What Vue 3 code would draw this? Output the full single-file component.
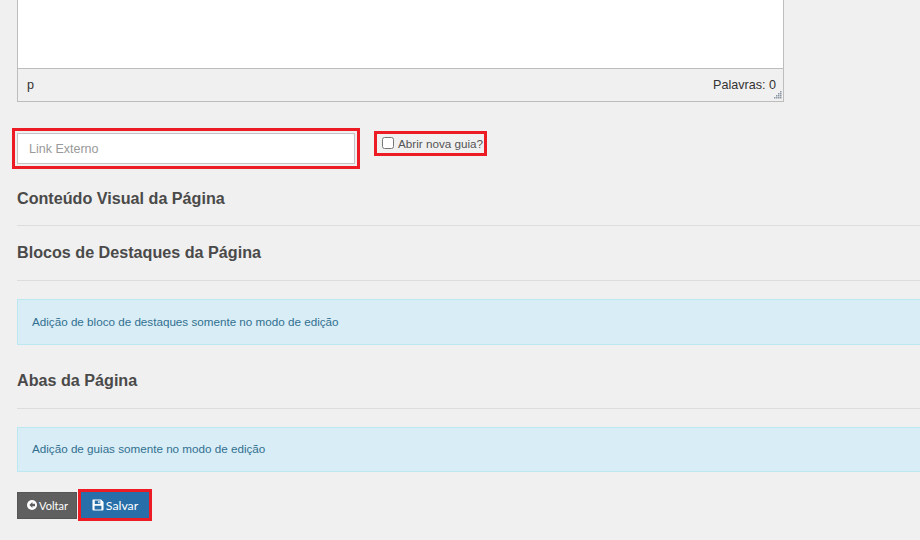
<script setup>
</script>

<template>
  <div class="page">
    <div class="editor">
      <div class="editor-body"></div>
      <div class="status">
        <span>p</span>
        <span class="words">Palavras: 0</span>
        <svg class="grip" width="10" height="10" viewBox="0 0 10 10">
          <g fill="#8c98a4">
            <rect x="8" y="1" width="1.5" height="1.5" /><rect x="6" y="3" width="1.5" height="1.5" /><rect x="8" y="3" width="1.5" height="1.5" />
            <rect x="4" y="5" width="1.5" height="1.5" /><rect x="6" y="5" width="1.5" height="1.5" /><rect x="8" y="5" width="1.5" height="1.5" />
            <rect x="2" y="7" width="1.5" height="1.5" /><rect x="4" y="7" width="1.5" height="1.5" /><rect x="6" y="7" width="1.5" height="1.5" /><rect x="8" y="7" width="1.5" height="1.5" />
          </g>
        </svg>
      </div>
    </div>

    <div class="link-row">
      <div class="mark mark-input">
        <input class="link-input" type="text" placeholder="Link Externo" />
      </div>
      <label class="mark mark-check">
        <input class="check" type="checkbox" />
        <span>Abrir nova guia?</span>
      </label>
    </div>

    <h3 class="title first">Conteúdo Visual da Página</h3>
    <hr class="rule" />
    <h3 class="title second">Blocos de Destaques da Página</h3>
    <hr class="rule rule-b" />
    <div class="alert alert-a">Adição de bloco de destaques somente no modo de edição</div>
    <h3 class="title third">Abas da Página</h3>
    <hr class="rule rule-b" />
    <div class="alert alert-b">Adição de guias somente no modo de edição</div>

    <div class="actions">
      <button class="btn back" type="button">
        <svg width="10" height="10" viewBox="0 0 10 10">
          <circle cx="5" cy="5" r="5" fill="#fff" />
          <path d="M5.4 2 2.4 5l3 3V6.2H8V3.8H5.4z" fill="#5f5f5f" />
        </svg>
        Voltar
      </button>
      <div class="mark mark-save">
        <button class="btn save" type="button">
          <svg width="12" height="12" viewBox="0 0 13 13">
            <path fill="#fff" fill-rule="evenodd" d="M1.2 0.5h8.6L12.5 3.2v8.1a1.2 1.2 0 0 1-1.2 1.2H1.7a1.2 1.2 0 0 1-1.2-1.2V1.2a.7.7 0 0 1 .7-.7zM3 1.7v3.6h6V1.7zM6.8 2.2h1.4v2.5H6.8zM2.8 7.2v4.1h7.4V7.2z" />
          </svg>
          Salvar
        </button>
      </div>
    </div>
  </div>
</template>

<style>
html, body { margin: 0; background: #f0f0f0; }
</style>

<style scoped>
.page {
  width: 920px;
  height: 540px;
  overflow: hidden;
  box-sizing: border-box;
  padding-left: 17px;
  background: #f0f0f0;
  font-family: "Liberation Sans", Arial, sans-serif;
  color: #444;
}
.editor {
  width: 767px;
  box-sizing: border-box;
  border: 1px solid #bdbdbd;
  border-top: 0;
  background: #f0f0f0;
}
.editor-body { height: 68px; background: #fff; border-bottom: 1px solid #bdbdbd; }
.status {
  position: relative;
  height: 32px;
  display: flex;
  justify-content: space-between;
  align-items: center;
  padding: 0 7px 0 9px;
  font-size: 12.6px;
  color: #333;
}
.words { margin-top: -1px; }
.grip { position: absolute; right: 1px; bottom: 1px; }
.link-row { display: flex; align-items: flex-start; margin: 26px 0 0 -5px; }
.mark { border: 3px solid #ed1c24; box-sizing: border-box; }
.mark-input { width: 348px; height: 41px; padding: 2px; }
.link-input {
  display: block;
  width: 338px;
  height: 31px;
  box-sizing: border-box;
  border: 1px solid #c4c4c4;
  background: #fff;
  padding: 0 11px;
  font: 12.5px "Liberation Sans", Arial, sans-serif;
  outline: none;
}
.link-input::placeholder { color: #999; opacity: 1; }
.mark-check {
  margin: 3px 0 0 14px;
  width: 113px;
  height: 25px;
  display: flex;
  align-items: center;
  padding-left: 5px;
  font-size: 11.7px;
  color: #555;
  white-space: nowrap;
}
.check { width: 12px; height: 12px; margin: 0 4px 2px 0; }
.title { margin: 0; font-size: 16.15px; line-height: 18px; font-weight: 700; color: #4a4a4a; }
.first { margin-top: 20px; }
.second { margin-top: 17px; }
.third { margin-top: 26px; }
.rule { margin: 18px 0 0; border: 0; border-top: 1px solid #ddd; }
.rule-b { margin-top: 19px; }
.alert {
  box-sizing: border-box;
  width: 903px;
  margin-top: 18px;
  padding: 0 0 2px 14px;
  display: flex;
  align-items: center;
  background: #d9edf7;
  border: 1px solid #bce8f1;
  border-right: 0;
  font-size: 11.66px;
  color: #31708f;
}
.alert-a { height: 46px; }
.alert-b { height: 45px; }
.actions { display: flex; align-items: center; gap: 1px; margin-top: 17px; }
.btn {
  display: flex;
  align-items: center;
  border: 1px solid transparent;
  color: #fff;
  font-family: Lato, "Liberation Sans", sans-serif;
  padding: 0;
  box-sizing: border-box;
}
.back {
  width: 60px;
  height: 27px;
  gap: 2px;
  padding-left: 1px;
  justify-content: center;
  background: #5f5f5f;
  border-color: #555;
  font-size: 11px;
}
.mark-save { width: 74px; height: 32px; }
.save {
  width: 68px;
  height: 26px;
  gap: 2px;
  justify-content: center;
  background: #286fa9;
  border-color: #286fa9;
  font-size: 12.3px;
}
</style>
